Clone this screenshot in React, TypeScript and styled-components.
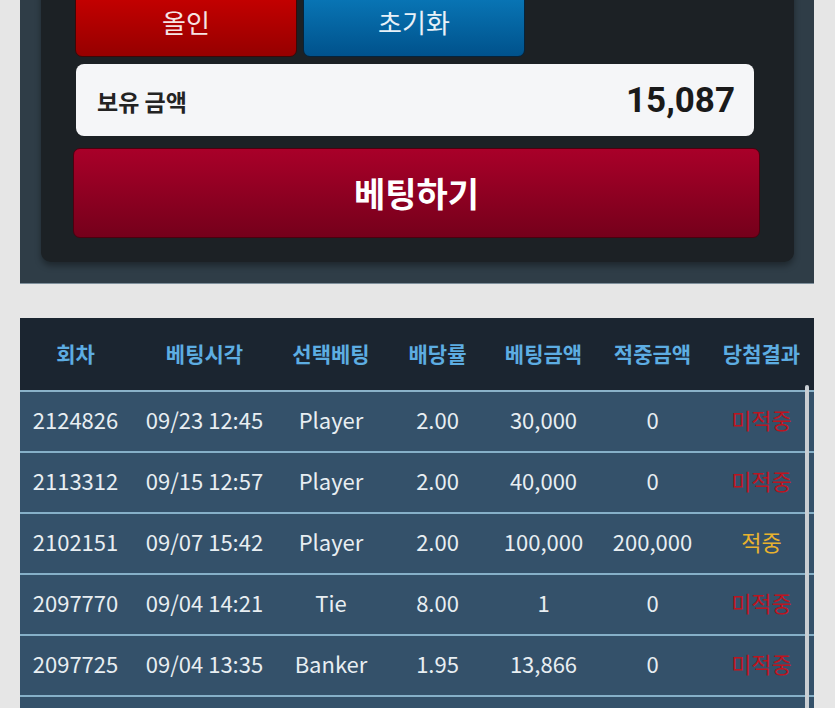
import styled, { createGlobalStyle } from "styled-components";

const GlobalStyle = createGlobalStyle`
  html, body {
    margin: 0;
    padding: 0;
    background: #e6e6e6;
    font-family: "Noto Sans CJK KR", "Noto Sans", sans-serif;
  }
  * {
    box-sizing: border-box;
  }
`;

const Page = styled.div`
  height: 708px;
  overflow: hidden;
  padding: 0 21px 0 20px;
`;

const TopPanel = styled.div`
  margin-top: -14px;
  background: #2f3d47;
  padding: 0 20px 21px 21px;
  border-bottom: 1px solid #7f909c;
`;

const Inner = styled.div`
  background: #1c2125;
  border-radius: 0 0 10px 10px;
  padding: 0 34px 24px 32px;
  box-shadow: 0 4px 6px rgba(0, 0, 0, 0.35);
`;

const ButtonRow = styled.div`
  display: flex;
  gap: 6px;
  padding-left: 2px;
`;

const SmallButton = styled.button<{ $variant: "red" | "blue" }>`
  width: 222px;
  height: 71px;
  border-radius: 7px;
  border: 1px solid ${(p) => (p.$variant === "red" ? "#3c0808" : "#06233a")};
  background: ${(p) =>
    p.$variant === "red"
      ? "linear-gradient(#cc0000, #960000)"
      : "linear-gradient(#0a7cbd, #00528c)"};
  color: ${(p) => (p.$variant === "red" ? "#f6e4e4" : "#e8f1f8")};
  font-family: "Noto Sans CJK KR", sans-serif;
  font-size: 26px;
  font-weight: 400;
  padding: 0;
`;

const BalanceBox = styled.div`
  margin: 7px 6px 0 3px;
  height: 72px;
  background: #f5f6f8;
  border-radius: 8px;
  display: flex;
  align-items: center;
  justify-content: space-between;
  padding: 0 19px 0 21px;
`;

const BalanceLabel = styled.span`
  font-size: 23px;
  font-weight: 700;
  color: #232323;
  margin-top: 2px;
`;

const BalanceValue = styled.span`
  font-family: Roboto, "Noto Sans", sans-serif;
  font-size: 35px;
  font-weight: 700;
  color: #1a1a1a;
`;

const BetButton = styled.button`
  display: block;
  width: 100%;
  margin-top: 12px;
  height: 90px;
  border-radius: 7px;
  border: 1px solid #4c000f;
  background: linear-gradient(#a90029, #75001b);
  color: #ffffff;
  font-family: "Noto Sans CJK KR", sans-serif;
  font-size: 34px;
  font-weight: 700;
  padding: 0 0 2px;
`;

const Table = styled.div`
  position: relative;
  margin-top: 34px;
`;

const columns = "111px 147px 106px 107px 105px 113px 1fr";

const HeaderRow = styled.div`
  display: grid;
  grid-template-columns: ${columns};
  height: 74px;
  background: #1b2530;
  border-bottom: 2px solid #8ab2c9;
`;

const HeaderCell = styled.div`
  display: flex;
  align-items: center;
  justify-content: center;
  color: #5dade2;
  font-size: 21px;
  font-weight: 700;
  white-space: nowrap;
  padding-bottom: 2px;
`;

const Row = styled.div`
  display: grid;
  grid-template-columns: ${columns};
  height: 61px;
  background: #34516a;
  border-bottom: 2px solid #86b0c8;
`;

const Cell = styled.div<{ $tone?: "lose" | "win" }>`
  display: flex;
  align-items: center;
  justify-content: center;
  white-space: nowrap;
  font-size: 22px;
  padding-bottom: 5px;
  color: ${(p) =>
    p.$tone === "lose" ? "#bc1420" : p.$tone === "win" ? "#e8b22e" : "#e8eef2"};
`;

const ScrollThumb = styled.div`
  position: absolute;
  right: 5px;
  top: 67px;
  bottom: 0;
  width: 4px;
  border-radius: 2px;
  background: #c9ced3;
`;

interface Bet {
  round: string;
  time: string;
  pick: string;
  odds: string;
  amount: string;
  payout: string;
  won: boolean;
}

const bets: Bet[] = [
  { round: "2124826", time: "09/23 12:45", pick: "Player", odds: "2.00", amount: "30,000", payout: "0", won: false },
  { round: "2113312", time: "09/15 12:57", pick: "Player", odds: "2.00", amount: "40,000", payout: "0", won: false },
  { round: "2102151", time: "09/07 15:42", pick: "Player", odds: "2.00", amount: "100,000", payout: "200,000", won: true },
  { round: "2097770", time: "09/04 14:21", pick: "Tie", odds: "8.00", amount: "1", payout: "0", won: false },
  { round: "2097725", time: "09/04 13:35", pick: "Banker", odds: "1.95", amount: "13,866", payout: "0", won: false },
];

const headers = ["회차", "베팅시각", "선택베팅", "배당률", "베팅금액", "적중금액", "당첨결과"];

export default function App() {
  return (
    <>
      <GlobalStyle />
      <Page>
        <TopPanel>
          <Inner>
            <ButtonRow>
              <SmallButton $variant="red">올인</SmallButton>
              <SmallButton $variant="blue">초기화</SmallButton>
            </ButtonRow>
            <BalanceBox>
              <BalanceLabel>보유 금액</BalanceLabel>
              <BalanceValue>15,087</BalanceValue>
            </BalanceBox>
            <BetButton>베팅하기</BetButton>
          </Inner>
        </TopPanel>
        <Table>
          <HeaderRow>
            {headers.map((h) => (
              <HeaderCell key={h}>{h}</HeaderCell>
            ))}
          </HeaderRow>
          {bets.map((b) => (
            <Row key={b.round}>
              <Cell>{b.round}</Cell>
              <Cell>{b.time}</Cell>
              <Cell>{b.pick}</Cell>
              <Cell>{b.odds}</Cell>
              <Cell>{b.amount}</Cell>
              <Cell>{b.payout}</Cell>
              <Cell $tone={b.won ? "win" : "lose"}>{b.won ? "적중" : "미적중"}</Cell>
            </Row>
          ))}
          {/* next row scrolled just into view */}
          <Row />
          <ScrollThumb />
        </Table>
      </Page>
    </>
  );
}
